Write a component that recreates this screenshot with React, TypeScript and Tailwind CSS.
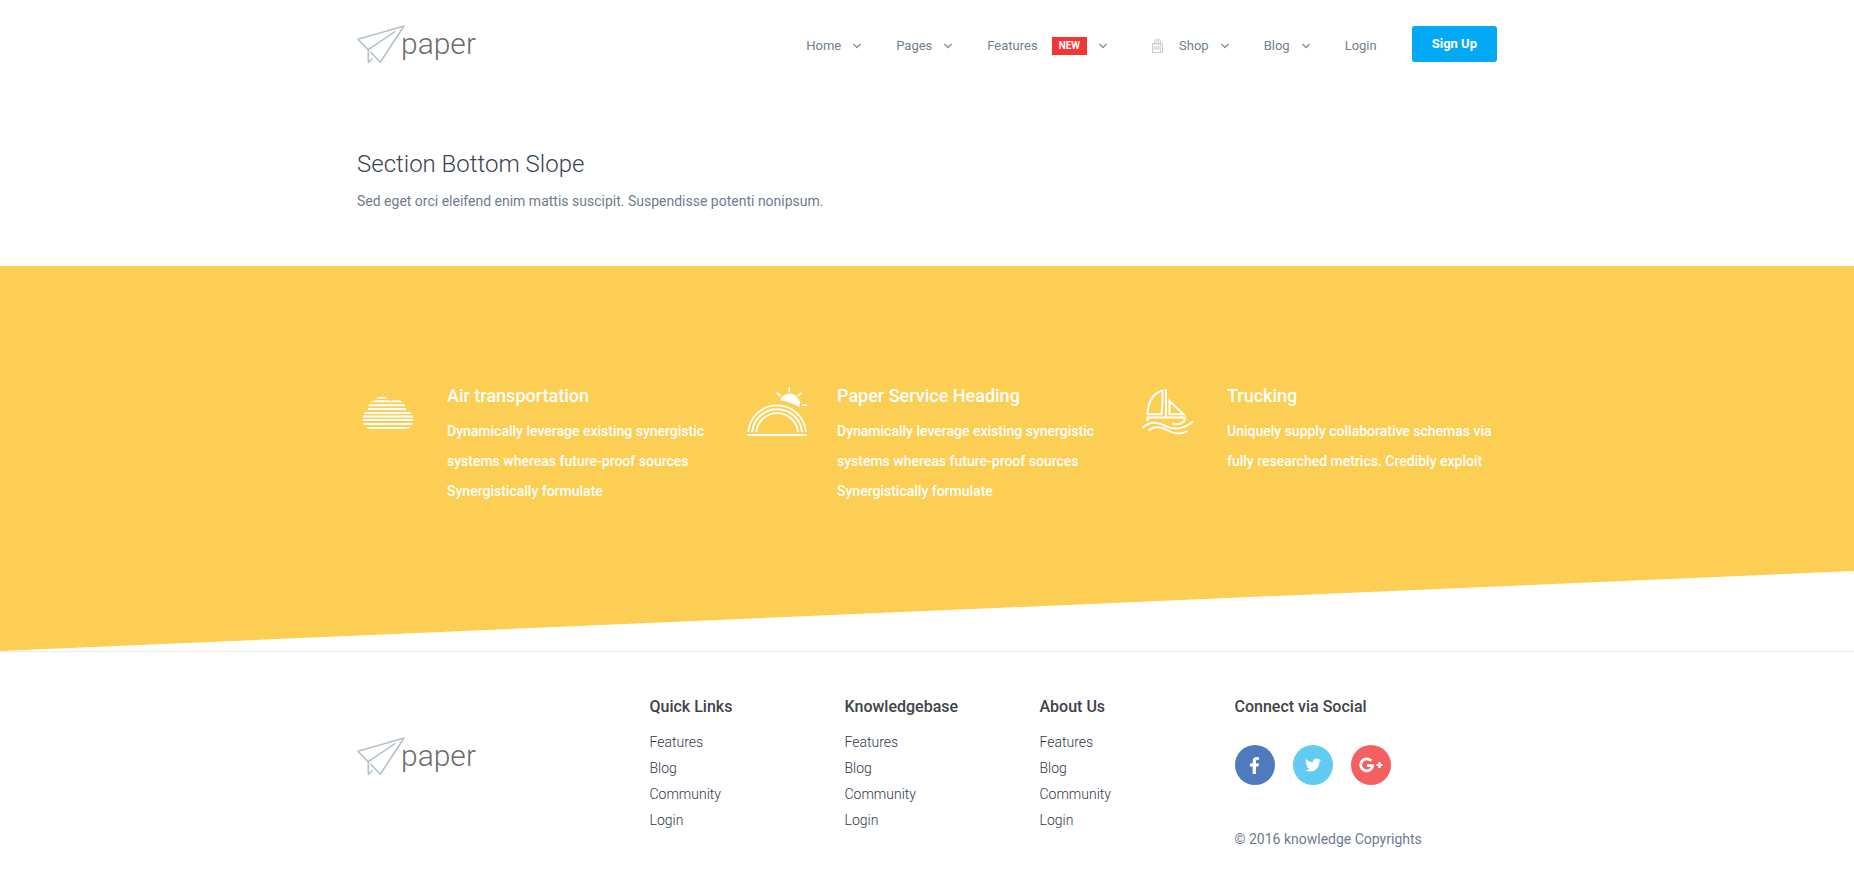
import { FaFacebookF, FaTwitter } from "react-icons/fa";
import type { ReactNode } from "react";

function Logo() {
  return (
    <a href="#home" className="inline-flex h-10 items-start" aria-label="paper home">
      <svg width="48" height="40" viewBox="0 0 48 40" fill="none" stroke="#b4c0ca" strokeWidth="1.6" strokeLinejoin="round" strokeLinecap="round" aria-hidden="true">
        <path d="M11.3 24.7 L1 14.3 L47 1 L23.3 37.3 L14 27.5" />
        <path d="M38 6.7 L11.3 24.7 V37.3 L15 33.8" />
      </svg>
      <span className="-ml-1 text-[30px] leading-[38px] font-light text-[#6c6c6c]">paper</span>
    </a>
  );
}

function Chevron() {
  return (
    <svg className="ml-3" width="8" height="6" viewBox="0 0 8 6" fill="none" stroke="#7f8e9b" strokeWidth="1.3" aria-hidden="true">
      <path d="M0.4 1 L4 4.5 L7.6 1" />
    </svg>
  );
}

function BagIcon() {
  return (
    <svg className="mr-4 ml-[10px]" width="11" height="14" viewBox="0 0 11 14" fill="none" stroke="#b9c1c9" strokeWidth="0.8" aria-hidden="true">
      <path d="M0.5 4.5 H10.5 V13.5 H0.5 Z M8.7 4.5 V13.5" />
      <path d="M2.5 6 V2.5 Q2.5 0.5 4.5 0.5 Q6.5 0.5 6.5 2.5 V6 M4.5 4 V2.5 Q5 0.5 6.5 0.5 Q8.5 0.7 8.5 3 V5" />
      <path d="M2 8 H7 V10 H2 Z" />
    </svg>
  );
}

type NavItem = { label: string; menu?: boolean; badge?: string; icon?: ReactNode };

const navItems: NavItem[] = [
  { label: "Home", menu: true },
  { label: "Pages", menu: true },
  { label: "Features", menu: true, badge: "NEW" },
  { label: "Shop", menu: true, icon: <BagIcon /> },
  { label: "Blog", menu: true },
  { label: "Login" },
];

function CloudIcon() {
  return (
    <svg width="60" height="60" viewBox="0 0 60 60" fill="none" aria-hidden="true">
      <clipPath id="cloud-shape">
        <path d="M15 47 C9 47 5.6 42 5.6 37 C5.6 33 7.5 29.5 11 28 C10.8 22 13.5 18.5 17.5 18.5 C19 15.5 22 14.4 24.5 14.4 C28 14.4 31.5 16 33.5 19 C36 17.6 39 17.4 42 18.2 C46.5 19.5 49 23 49 28 C53.5 29.5 56.4 33 56.4 37.5 C56.4 43 53 47 48 47 Z" />
      </clipPath>
      <path
        clipPath="url(#cloud-shape)"
        stroke="#fff"
        strokeWidth="2"
        d="M0 15.4 H60 M0 19.3 H60 M0 23.2 H60 M0 27.1 H60 M0 31 H60 M0 34.5 H60 M0 38 H60 M0 42 H60 M0 46 H60"
      />
    </svg>
  );
}

function RainbowIcon() {
  return (
    <svg width="60" height="60" viewBox="0 0 60 60" stroke="#fff" strokeWidth="1.8" fill="none" aria-hidden="true">
      <path d="M0.3 53 H60" strokeWidth="2" />
      <path d="M1.2 50 A29 29 0 0 1 59 50 M5.2 50 A25 25 0 0 1 55 50 M9.2 50 A21 21 0 0 1 51 50" />
      <path d="M33 18.3 A10 10 0 0 1 52.3 25.5 Q44 19.5 33 18.3 Z" fill="#fff" stroke="none" />
      <path d="M42.2 5.3 V10.3 M29.7 10.5 L33.3 14 M54.5 10.7 L51 14 M55 23 H60" />
    </svg>
  );
}

function BoatIcon() {
  return (
    <svg width="60" height="60" viewBox="0 0 60 60" stroke="#fff" strokeWidth="2" fill="none" aria-hidden="true">
      <path d="M29 7 V35" />
      <path d="M25.5 8.5 Q11 13 10.5 32.3 H24.5 Q26 20 25.5 8.5 Z M32.5 19 V32.3 H46.5 Z" />
      <path d="M10.5 39 V35.5 H48 Q48 42 39 42.2 Q37 42.2 35.5 41.5" />
      <path d="M5.5 46 Q14 37.5 26 42.8 C36 48 45 48.5 56 39.5 M11.5 48.2 Q19 42.5 29 47.5 C37 52 44 53 50.5 49.2" />
    </svg>
  );
}

const services = [
  {
    title: "Air transportation",
    text: "Dynamically leverage existing synergistic systems whereas future-proof sources Synergistically formulate",
    icon: <CloudIcon />,
  },
  {
    title: "Paper Service Heading",
    text: "Dynamically leverage existing synergistic systems whereas future-proof sources Synergistically formulate",
    icon: <RainbowIcon />,
  },
  {
    title: "Trucking",
    text: "Uniquely supply collaborative schemas via fully researched metrics. Credibly exploit",
    icon: <BoatIcon />,
  },
];

const linkGroups = ["Quick Links", "Knowledgebase", "About Us"];
const groupLinks = ["Features", "Blog", "Community", "Login"];

function GooglePlus() {
  return (
    <svg width="24" height="16" viewBox="0 0 24 16" fill="none" stroke="#fff" aria-hidden="true">
      <path d="M12.3 3.9 A6 6 0 1 0 13.7 8.6 H8" strokeWidth="2.8" />
      <path d="M20.5 5 V11 M17.5 8 H23.5" strokeWidth="2.2" />
    </svg>
  );
}

export default function App() {
  return (
    <div className="min-h-screen bg-white font-['Roboto',sans-serif]">
      <header className="mx-auto flex max-w-[1170px] items-start justify-between px-[15px] pt-[25px]">
        <Logo />
        <nav className="flex items-center pt-px" aria-label="Main">
          <ul className="flex items-center gap-[35px] pt-[3px] pr-[35px]">
            {navItems.map((item) => (
              <li key={item.label}>
                <a href={"#" + item.label.toLowerCase()} className="flex items-center text-[13px] leading-5 text-[#71808d]">
                  {item.icon}
                  {item.label}
                  {item.badge && (
                    <span className="ml-[14px] bg-[#f33538] px-[7px] text-[10px] leading-[18px] font-bold text-white">{item.badge}</span>
                  )}
                  {item.menu && <Chevron />}
                </a>
              </li>
            ))}
          </ul>
          <button type="button" className="h-9 rounded-[3px] bg-[#03a9f4] px-5 text-[13px] font-bold text-white">
            Sign Up
          </button>
        </nav>
      </header>

      <main>
        <div className="mx-auto max-w-[1170px] px-[15px] pt-[81px] pb-[52px]">
          <h1 className="text-[24px] leading-9 font-light text-[#3a4254]">Section Bottom Slope</h1>
          <p className="mt-[6px] text-[14px] leading-[26px] text-[#6f7b8f]">
            Sed eget orci eleifend enim mattis suscipit. Suspendisse potenti nonipsum.
          </p>
        </div>
        <section className="bg-[#fcce54] pt-[116px] pb-[145px] text-white [clip-path:polygon(0_0,100%_0,100%_calc(100%-80px),0_100%)]">
          <div className="mx-auto grid max-w-[1170px] grid-cols-3">
            {services.map((service) => (
              <article key={service.title} className="flex gap-[30px] px-[15px]">
                <div className="shrink-0">{service.icon}</div>
                <div className="pt-1">
                  <h2 className="text-[18px] leading-5 font-medium">{service.title}</h2>
                  <p className="mt-[10px] text-[14px] leading-[30px] font-medium">{service.text}</p>
                </div>
              </article>
            ))}
          </div>
        </section>
      </main>

      <footer className="border-t border-[#ebebeb]">
        <div className="mx-auto grid max-w-[1170px] grid-cols-12 pt-[45px] text-[14px]">
          <div className="col-span-3 px-[15px] pt-10">
            <Logo />
          </div>
          {linkGroups.map((group) => (
            <div key={group} className="col-span-2 px-[15px]">
              <h3 className="text-[16px] leading-5 font-medium text-[#3f4349]">{group}</h3>
              <ul className="mt-3">
                {groupLinks.map((link) => (
                  <li key={link} className="leading-[26px]">
                    <a href={"#" + link.toLowerCase()} className="font-light text-[#2f3648]">
                      {link}
                    </a>
                  </li>
                ))}
              </ul>
            </div>
          ))}
          <div className="col-span-3 px-[15px]">
            <h3 className="text-[16px] leading-5 font-medium text-[#3f4349]">Connect via Social</h3>
            <div className="mt-7 flex gap-[18px] text-white">
              <a href="#facebook" aria-label="Facebook" className="flex size-10 items-center justify-center rounded-full bg-[#4f7bbe]">
                <FaFacebookF size={17} />
              </a>
              <a href="#twitter" aria-label="Twitter" className="flex size-10 items-center justify-center rounded-full bg-[#62cbf1]">
                <FaTwitter size={16} />
              </a>
              <a href="#google-plus" aria-label="Google Plus" className="flex size-10 items-center justify-center rounded-full bg-[#f4605f]">
                <GooglePlus />
              </a>
            </div>
            <p className="mt-[41px] leading-[26px] text-[#6f7b8f]">© 2016 knowledge Copyrights</p>
          </div>
        </div>
      </footer>
    </div>
  );
}
